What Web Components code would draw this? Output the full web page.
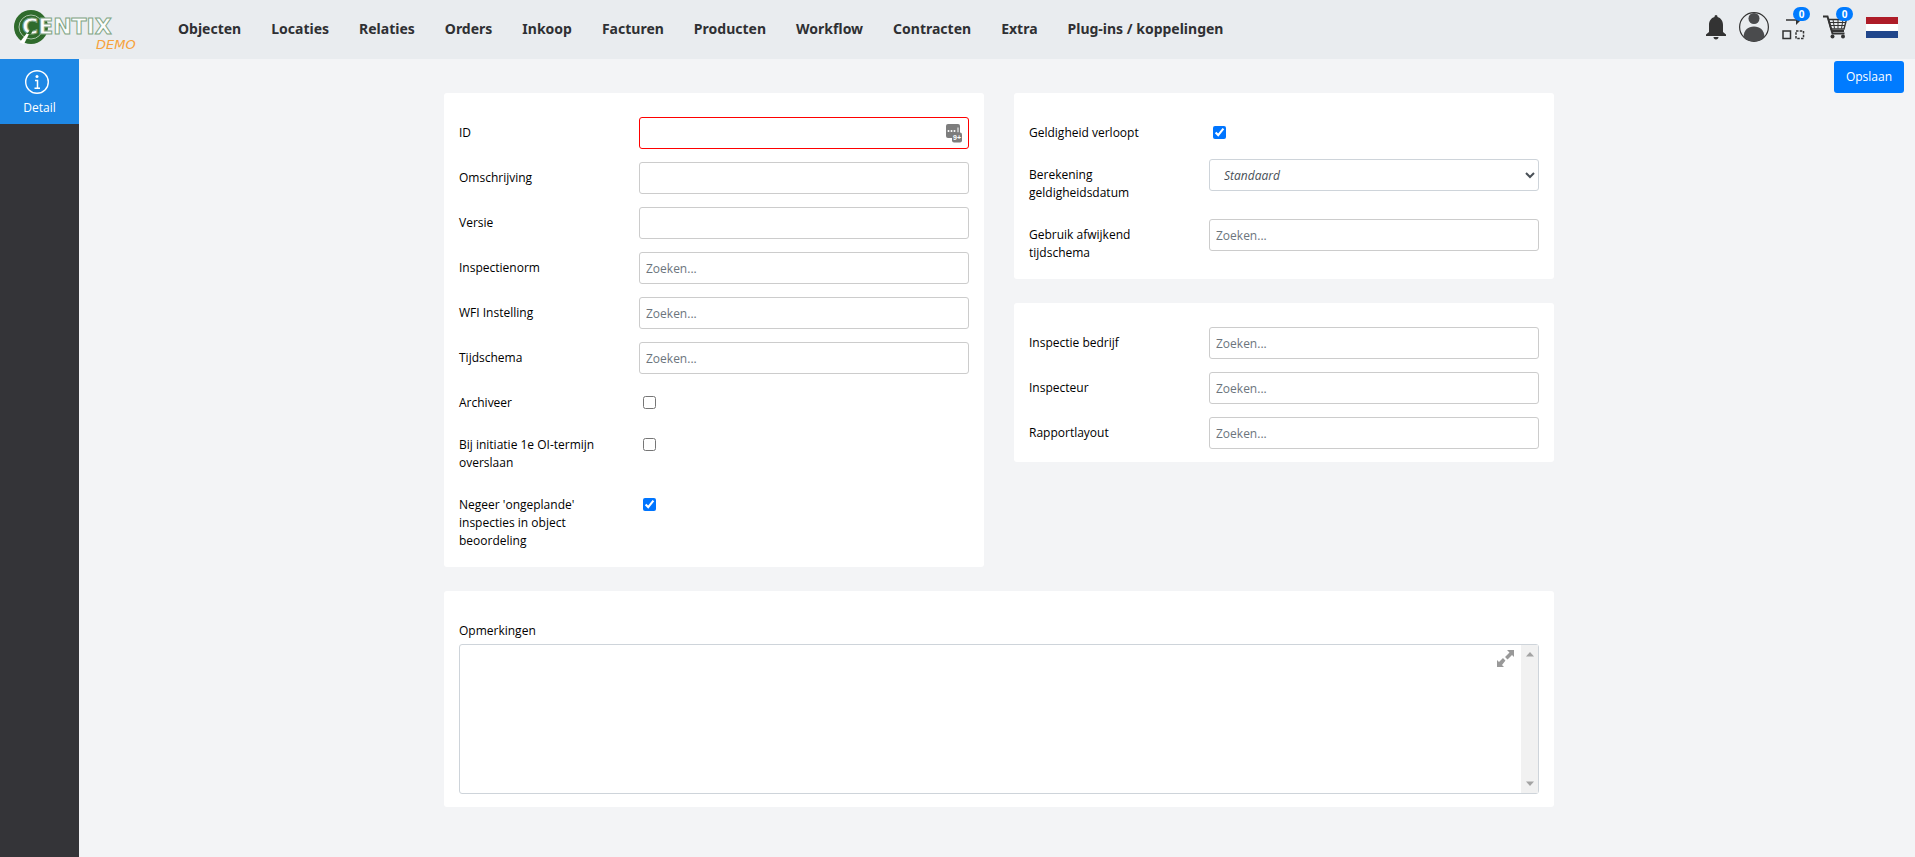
<!DOCTYPE html>
<html lang="nl">
<head>
<meta charset="utf-8">
<title>Centix</title>
<style>
html, body { margin: 0; min-height: 100vh; background: #f3f4f6; }
body { font: 12px/18px "Open Sans", "Noto Sans", sans-serif; color: #000; }
</style>
</head>
<body>
<centix-app></centix-app>
<script>
const define = (name, html, setup) => {
  const template = document.createElement('template');
  template.innerHTML = '<style>*,*::before,*::after{box-sizing:border-box}</style>' + html;
  customElements.define(name, class extends HTMLElement {
    connectedCallback() {
      if (this.shadowRoot) return;
      this.attachShadow({ mode: 'open' }).append(template.content.cloneNode(true));
      if (setup) setup(this, this.shadowRoot);
    }
  });
};

define('centix-logo', `
<style>
:host { display: block; width: 130px; height: 44px; flex: none; }
svg { display: block; }
</style>
<svg width="130" height="44" viewBox="10 5 130 44" role="img" aria-label="Centix">
  <circle cx="31" cy="24" r="17" fill="#2f6b2c"/>
  <circle cx="31" cy="24" r="12" fill="none" stroke="#a9c4a8" stroke-width="1"/>
  <path d="M19.500 39.500L27 30L29 31L24 41Z" fill="#fff"/>
  <text x="22" y="31" font-family="DejaVu Sans, sans-serif" font-weight="700" font-size="22" fill="#fbfcfc" stroke="#7fa583" stroke-width="1">CENTIX</text>
  <path d="M27 31l5-7 2 1-3 6z" fill="#2f6b2c"/>
  <text x="96" y="46" font-family="DejaVu Sans, sans-serif" font-style="italic" font-size="13" fill="#f7a23b">DEMO</text>
</svg>`);

define('top-bar', `
<style>
:host { display: flex; align-items: center; height: 59px; padding: 0 17px 0 10px; background: #e9ecef; }
nav { display: flex; gap: 30px; margin-left: 38px; padding-bottom: 2px; flex: 1; }
a { font-family: "Noto Sans", sans-serif; font-size: 14px; line-height: 20px; font-weight: 700; color: #2f3033; text-decoration: none; white-space: nowrap; }
</style>
<centix-logo></centix-logo>
<nav>
<a href="#">Objecten</a><a href="#">Locaties</a><a href="#">Relaties</a><a href="#">Orders</a><a href="#">Inkoop</a><a href="#">Facturen</a><a href="#">Producten</a><a href="#">Workflow</a><a href="#">Contracten</a><a href="#">Extra</a><a href="#">Plug-ins / koppelingen</a>
</nav>
<slot></slot>`);

define('tool-button', `
<style>
:host { display: block; position: relative; }
button { display: block; padding: 0; border: 0; background: none; }
.badge { position: absolute; top: 2px; right: 0; width: 17px; height: 14px; border-radius: 7px; background: #007bff; color: #fff; font-size: 10px; line-height: 14px; font-weight: 700; text-align: center; }
.badge:empty { display: none; }
</style>
<button type="button"><slot></slot></button><span class="badge"></span>`, (el, root) => {
  root.querySelector('button').setAttribute('aria-label', el.getAttribute('label'));
  root.querySelector('.badge').textContent = el.getAttribute('count') || '';
});

define('side-bar', `
<style>
:host { display: block; width: 79px; flex: none; background: #343438; }
a { display: flex; flex-direction: column; align-items: center; gap: 5px; height: 65px; padding-top: 11px; background: #1e88e5; color: #fff; text-decoration: none; }
svg { display: block; margin-right: 5px; }
</style>
<a href="#"><svg width="24" height="24" viewBox="0 0 24 24" fill="none" stroke="#fff"><circle cx="12" cy="12" r="11.300" stroke-width="1.400"/><circle cx="12" cy="6.500" r="1.500" fill="#fff" stroke="none"/><path d="M10 10.500h2.500v7.500M9.500 18.300h5.500" stroke-width="1.500"/></svg><span>Detail</span></a>`);

define('form-card', `
<style>
:host { display: block; padding: 24px 15px 0; border-radius: 3px; background: #fff; }
</style><slot></slot>`);

define('form-field', `
<style>
:host { display: grid; grid-template-columns: 180fr 330fr; align-items: start; }
label { padding: 7px 30px 17px 0; }
.control { position: relative; }
input[type=text], select { display: block; width: 100%; height: 32px; margin: 0 0 13px; padding: 0 6px; border: 1px solid #ced4da; border-radius: 3px; background: #fff; font: inherit; color: #495057; outline: 0; }
input[type=text] { border-color: #ccc; }
input[type=text].required { border-color: #f00; }
input::placeholder { color: #6c757d; opacity: 1; }
select { padding: 0 0 0 10px; font-style: italic; }
input[type=checkbox] { display: block; width: 13px; height: 13px; margin: 9px 4px 0; accent-color: #0075ff; }
svg { position: absolute; right: 7px; top: 7px; }
:host([kind=text]) { min-height: 45px; }
</style>
<label for="control"></label><div class="control"></div>`, (el, root) => {
  root.querySelector('label').textContent = el.getAttribute('label');
  const kind = el.getAttribute('kind');
  const control = document.createElement(kind === 'select' ? 'select' : 'input');
  control.id = 'control';
  if (kind === 'select') control.add(new Option(el.getAttribute('value')));
  else control.type = kind;
  if (kind === 'text') control.placeholder = el.getAttribute('placeholder') || '';
  if (kind === 'checkbox') control.checked = el.hasAttribute('checked');
  const box = root.querySelector('.control');
  box.append(control);
  if (el.hasAttribute('required')) {
    control.setAttribute('aria-required', 'true');
    control.className = 'required';
    box.insertAdjacentHTML('beforeend', '<svg width="16" height="19" viewBox="0 0 16 19"><rect width="14" height="14" rx="2" fill="#7d7d7d"/><g fill="#fff"><circle cx="2.500" cy="7" r="1"/><circle cx="5.500" cy="7" r="1"/><circle cx="8.500" cy="7" r="1"/><path d="M11.500 3.500h1v5h-1z"/></g><rect x="6" y="8.500" width="10" height="10" rx="2" fill="#7d7d7d"/><text x="7" y="16" font-family="Liberation Sans" font-weight="700" font-size="7" fill="#fff">9+</text></svg>');
  }
});

define('remarks-field', `
<style>
:host { display: block; padding-bottom: 13px; }
label { display: block; padding: 7px 0 4px; }
.frame { position: relative; }
textarea { display: block; width: 100%; height: 150px; margin: 0; border: 1px solid #ced4da; border-radius: 3px; resize: none; background: #fff; font: inherit; outline: 0; }
.scroll { position: absolute; top: 1px; right: 1px; bottom: 1px; width: 17px; background: #f1f1f1; display: flex; flex-direction: column; align-items: center; justify-content: space-between; padding: 7px 0; }
.scroll svg { display: block; }
button { position: absolute; top: 6px; right: 25px; padding: 0; border: 0; background: none; }
button svg { display: block; }
</style>
<label for="remarks">Opmerkingen</label>
<div class="frame"><textarea id="remarks"></textarea>
<button type="button" aria-label="Vergroten"><svg width="17" height="17" viewBox="0 0 17 17" fill="#999"><path d="M10 0h7v7l-2-2-4.500 4.500-2.500-2.500L12.500 2.500zM0 17v-7l2 2 4-4 2.500 2.500L5 15l2 2z"/><path d="M6 6.500L10.500 11" stroke="#fff" stroke-width="1.500"/></svg></button>
<div class="scroll"><svg width="8" height="5"><path d="M0 4.500L4 0l4 4.500z" fill="#a3a3a3"/></svg><svg width="8" height="5"><path d="M0 .5L4 5l4-4.500z" fill="#a3a3a3"/></svg></div></div>`);

define('centix-app', `
<style>
:host { display: flex; flex-direction: column; min-height: 100vh; }
.body { display: flex; flex: 1; }
main { flex: 1; min-width: 0; padding-left: 4px; }
.actions { height: 34px; padding: 2px 11px 0 0; display: flex; justify-content: flex-end; }
.actions button { height: 32px; padding: 0 12px; border: 0; border-radius: 3px; background: #007bff; color: #fff; font: inherit; }
.cards { max-width: 1110px; margin: 0 auto; display: grid; grid-template-columns: 1fr 1fr; gap: 24px 30px; align-items: start; }
.stack { display: grid; gap: 24px; }
.wide { grid-column: 1 / -1; }
.tools { display: flex; align-items: center; gap: 13px; height: 59px; padding-bottom: 5px; }
svg { display: block; }
</style>
<top-bar><div class="tools">
<tool-button label="Meldingen"><svg width="20" height="25" viewBox="0 0 20 25" fill="#333"><path d="M10 0c1 0 1.500.800 1.500 2C15 3 17 6 17 10v7l3 2.500V21H0v-1.500L3 17v-7C3 6 5 3 8.500 2 8.500.800 9 0 10 0zM7.500 22h5c0 1.500-1 2.500-2.500 2.500S7.500 23.500 7.500 22z"/></svg></tool-button>
<tool-button label="Gebruiker"><svg width="30" height="30" viewBox="0 0 30 30"><circle cx="15" cy="15" r="14.400" fill="none" stroke="#333" stroke-width="1.200"/><circle cx="15" cy="6.500" r="5.500" fill="#4a4b4d"/><path d="M4.500 24.500C5 18 9 14.500 15 14.500S25 18 25.500 24.500C22.500 28 19 29.500 15 29.500S7.500 28 4.500 24.500z" fill="#4a4b4d"/></svg></tool-button>
<tool-button label="Wisselen" count="0"><svg width="28" height="44" viewBox="1 -2 28 44" fill="none" stroke="#333"><path d="M5 13h12" stroke-width="1.500"/><path d="M15 9l5 4-5 5z" fill="#333" stroke="none"/><path d="M2 24h7.500v7.500H2z" stroke-width="1.500"/><path d="M15 24h7.500v7.500H15z" stroke-width="1.500" stroke-dasharray="2.500 1.250"/></svg></tool-button>
<tool-button label="Winkelwagen" count="0"><svg width="30" height="44" viewBox="0 -2 30 44" fill="none" stroke="#333"><path d="M0 9.500h4.500L9.500 26.500h12" stroke-width="2"/><path d="M5.500 12.500h18l-2.500 9.500H8z" stroke-width="1.400"/><path d="M6 15.500h16M7 18.500h15M10 12.500l1.500 9M15 12.500v9M20 12.500l-1.500 9" stroke-width="1"/><path d="M9 24h12" stroke-width="2"/><g fill="#333" stroke="none"><circle cx="9.500" cy="29.500" r="2"/><circle cx="20" cy="29.500" r="2"/></g></svg></tool-button>
<tool-button label="Nederlands"><svg width="32" height="21"><path fill="#ae1c28" d="M0 0h32v7H0z"/><path fill="#fff" d="M0 7h32v7H0z"/><path fill="#21468b" d="M0 14h32v7H0z"/></svg></tool-button>
</div></top-bar>
<div class="body"><side-bar></side-bar><main>
<div class="actions"><button type="button">Opslaan</button></div>
<div class="cards">
<form-card>
<form-field kind="text" label="ID" required></form-field>
<form-field kind="text" label="Omschrijving"></form-field>
<form-field kind="text" label="Versie"></form-field>
<form-field kind="text" label="Inspectienorm" placeholder="Zoeken..."></form-field>
<form-field kind="text" label="WFI Instelling" placeholder="Zoeken..."></form-field>
<form-field kind="text" label="Tijdschema" placeholder="Zoeken..."></form-field>
<form-field kind="checkbox" label="Archiveer"></form-field>
<form-field kind="checkbox" label="Bij initiatie 1e OI-termijn overslaan"></form-field>
<form-field kind="checkbox" label="Negeer 'ongeplande' inspecties in object beoordeling" checked></form-field>
</form-card>
<div class="stack">
<form-card>
<form-field kind="checkbox" label="Geldigheid verloopt" checked></form-field>
<form-field kind="select" label="Berekening geldigheidsdatum" value="Standaard"></form-field>
<form-field kind="text" label="Gebruik afwijkend tijdschema" placeholder="Zoeken..."></form-field>
</form-card>
<form-card>
<form-field kind="text" label="Inspectie bedrijf" placeholder="Zoeken..."></form-field>
<form-field kind="text" label="Inspecteur" placeholder="Zoeken..."></form-field>
<form-field kind="text" label="Rapportlayout" placeholder="Zoeken..."></form-field>
</form-card>
</div>
<form-card class="wide"><remarks-field></remarks-field></form-card>
</div>
</main></div>`);
</script>
</body>
</html>
